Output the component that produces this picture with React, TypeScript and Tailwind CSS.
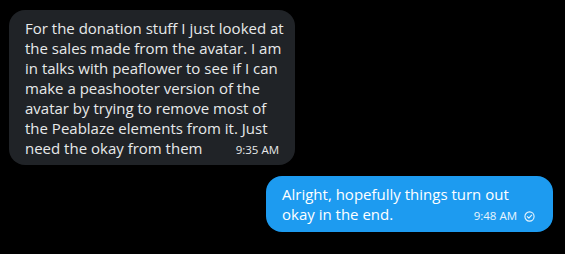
const grayLines = [
  "For the donation stuff I just looked at",
  "the sales made from the avatar. I am",
  "in talks with peaflower to see if I can",
  "make a peashooter version of the",
  "avatar by trying to remove most of",
  "the Peablaze elements from it. Just",
];

function CheckCircle() {
  return (
    <svg width="11" height="11" viewBox="0 0 12 12" fill="none" className="ml-[7px]">
      <circle cx="6" cy="6" r="5" stroke="currentColor" strokeWidth="1.2" />
      <path d="M3.6 6.2 5.3 7.8 8.4 4.4" stroke="currentColor" strokeWidth="1.2" strokeLinecap="round" strokeLinejoin="round" />
    </svg>
  );
}

export default function App() {
  return (
    <div
      className="flex h-[254px] w-[565px] flex-col bg-black"
      style={{ fontFamily: '"Open Sans", "Noto Sans", sans-serif' }}
    >
      <div className="ml-[9px] mt-[10px] w-[286px] rounded-[16px] bg-[#202327] px-4 pb-[7px] pt-2 text-[15px] leading-5 text-[#e7e9ea]">
        {grayLines.map((line) => (
          <div key={line} className="whitespace-nowrap">
            {line}
          </div>
        ))}
        <div className="flex items-end justify-between whitespace-nowrap">
          <span>need the okay from them</span>
          <span className="text-[11.5px] leading-4">9:35 AM</span>
        </div>
      </div>

      <div className="ml-auto mr-[12px] mt-[11px] w-[287px] rounded-[16px] bg-[#1d9bf0] px-4 pb-2 pt-2 text-[15px] leading-5 text-white">
        <div className="whitespace-nowrap">Alright, hopefully things turn out</div>
        <div className="flex items-end justify-between whitespace-nowrap">
          <span>okay in the end.</span>
          <span className="mr-[2px] flex items-center text-[11.5px] leading-4 text-[#e8f5fd]">
            9:48 AM
            <CheckCircle />
          </span>
        </div>
      </div>
    </div>
  );
}
